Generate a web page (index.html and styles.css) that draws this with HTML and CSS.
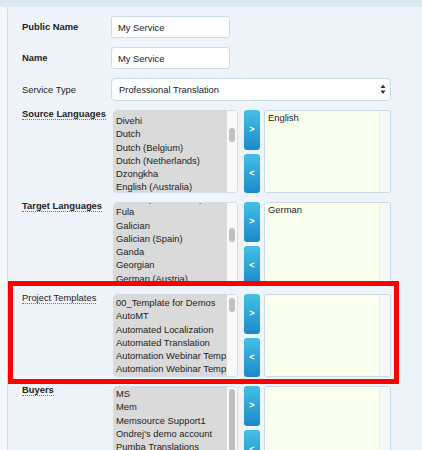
FILE: index.html
```html
<!DOCTYPE html>
<html>
<head>
<meta charset="utf-8">
<link rel="stylesheet" href="styles.css">
</head>
<body>
<div class="topbar"></div>
<div class="page">
  <div class="panel">
    <div class="form">
      <div class="lbl mid"><span class="bold">Public Name</span></div>
      <div class="ctl"><input class="text" type="text" value="My Service"></div>

      <div class="lbl mid"><span class="bold">Name</span></div>
      <div class="ctl"><input class="text" type="text" value="My Service"></div>

      <div class="lbl mid"><span>Service Type</span></div>
      <div class="ctl">
        <div class="select">
          <span>Professional Translation</span>
          <svg class="arrows" width="6" height="11" viewBox="0 0 6 11"><path d="M3 0.5 L5.5 4 L0.5 4 Z M0.5 6.5 L5.5 6.5 L3 10 Z" fill="#333"/></svg>
        </div>
      </div>

      <div class="lbl top"><span class="dot bold">Source Languages</span></div>
      <div class="dual">
        <div class="avail">
          <div class="opts" style="padding-top:3px">
            <div class="opt">Divehi</div>
            <div class="opt">Dutch</div>
            <div class="opt">Dutch (Belgium)</div>
            <div class="opt">Dutch (Netherlands)</div>
            <div class="opt">Dzongkha</div>
            <div class="opt">English (Australia)</div>
            <div class="opt">English (Canada)</div>
          </div>
          <div class="track"><div class="thumb" style="margin-top:17px;height:14px"></div></div>
        </div>
        <div class="btns"><button class="mv">&gt;</button><button class="mv">&lt;</button></div>
        <div class="chosen"><div class="copts"><div class="opt">English</div></div><div class="ctrack"></div></div>
      </div>

      <div class="lbl top"><span class="dot bold">Target Languages</span></div>
      <div class="dual">
        <div class="avail">
          <div class="opts" style="margin-top:-11px">
            <div class="opt">French (Switzerland)</div>
            <div class="opt">Fula</div>
            <div class="opt">Galician</div>
            <div class="opt">Galician (Spain)</div>
            <div class="opt">Ganda</div>
            <div class="opt">Georgian</div>
            <div class="opt">German (Austria)</div>
          </div>
          <div class="track"><div class="thumb" style="margin-top:25px;height:14px"></div></div>
        </div>
        <div class="btns"><button class="mv">&gt;</button><button class="mv">&lt;</button></div>
        <div class="chosen"><div class="copts"><div class="opt">German</div></div><div class="ctrack"></div></div>
      </div>

      <div class="lbl top"><span class="dot">Project Templates</span></div>
      <div class="dual">
        <div class="avail">
          <div class="opts" style="padding-top:1px">
            <div class="opt">00_Template for Demos</div>
            <div class="opt">AutoMT</div>
            <div class="opt">Automated Localization</div>
            <div class="opt">Automated Translation</div>
            <div class="opt">Automation Webinar Temp</div>
            <div class="opt">Automation Webinar Temp</div>
            <div class="opt">Automation Webinar Temp</div>
          </div>
          <div class="track"><div class="thumb" style="margin-top:3px;height:14px"></div></div>
        </div>
        <div class="btns"><button class="mv">&gt;</button><button class="mv">&lt;</button></div>
        <div class="chosen"><div class="copts"></div><div class="ctrack"></div></div>
      </div>

      <div class="lbl top"><span class="dot bold">Buyers</span></div>
      <div class="dual">
        <div class="avail">
          <div class="opts" style="padding-top:0">
            <div class="opt">MS</div>
            <div class="opt">Mem</div>
            <div class="opt">Memsource Support1</div>
            <div class="opt">Ondrej's demo account</div>
            <div class="opt">Pumba Translations</div>
            <div class="opt">Test Buyer</div>
            <div class="opt">Test Buyer 2</div>
          </div>
          <div class="track"><div class="thumb" style="margin-top:2px;height:76px"></div></div>
        </div>
        <div class="btns"><button class="mv">&gt;</button><button class="mv">&lt;</button></div>
        <div class="chosen"><div class="copts"></div><div class="ctrack"></div></div>
      </div>
    </div>
  </div>
  <div class="highlight"></div>
</div>
</body>
</html>
```

FILE: styles.css
```css
html, body {
  margin: 0;
  padding: 0;
}
body {
  background: #f5f8fa;
  font-family: "Liberation Sans", Arial, sans-serif;
  font-size: 9.4px;
  color: #222;
  overflow: hidden;
}
.topbar {
  height: 7px;
  background: #dde9f1;
}
.page {
  position: relative;
}
.panel {
  margin-left: 7px;
  border-left: 1px solid #d3dee6;
  background: #eef4f9;
  padding: 9px 0 20px 14px;
  min-height: 460px;
}
.form {
  display: grid;
  grid-template-columns: 89px 280px;
  row-gap: 9px;
}
.lbl {
  line-height: 12px;
  white-space: nowrap;
}
.lbl.mid {
  align-self: center;
}
.lbl.top {
  align-self: start;
  margin-top: -2px;
}
.bold {
  font-weight: bold;
}
.dot {
  border-bottom: 1px dotted #6b7680;
}
.ctl {
  display: flex;
}
.text {
  box-sizing: border-box;
  width: 119px;
  height: 22px;
  margin: 0;
  padding: 0 6px;
  border: 1px solid #c9dce8;
  border-radius: 3px;
  background: #fff;
  font-family: "Liberation Sans", Arial, sans-serif;
  font-size: 9.4px;
  color: #222;
  outline: none;
}
.select {
  box-sizing: border-box;
  width: 280px;
  height: 23px;
  border: 1px solid #c9dce8;
  border-radius: 4px;
  background: #fff;
  display: flex;
  align-items: center;
  justify-content: space-between;
  padding: 0 4px 0 7px;
}
.arrows {
  display: block;
}
.dual {
  display: flex;
  height: 83px;
  margin-left: 2px;
}
.avail {
  box-sizing: border-box;
  width: 125px;
  height: 83px;
  border: 1px solid #d3dde4;
  border-radius: 4px;
  overflow: hidden;
  display: flex;
}
.opts {
  flex: 1;
  background: #dadada;
  overflow: hidden;
  padding-left: 2px;
}
.opt {
  height: 13.3px;
  line-height: 13.3px;
  white-space: nowrap;
  color: #222;
}
.track {
  width: 10px;
  background: #fafafa;
  display: flex;
  flex-direction: column;
  align-items: center;
}
.thumb {
  width: 5.5px;
  background: #c0c0c0;
  border-radius: 3px;
  flex: none;
}
.btns {
  margin-left: 6px;
  width: 16px;
  display: flex;
  flex-direction: column;
  gap: 4px;
}
.mv {
  flex: 1;
  border: none;
  padding: 0;
  margin: 0;
  border-radius: 3px;
  background: linear-gradient(#43c1e4, #1c89ca);
  color: #fff;
  font-family: "Liberation Sans", Arial, sans-serif;
  font-weight: bold;
  font-size: 9px;
  line-height: 1;
}
.chosen {
  box-sizing: border-box;
  margin-left: 4px;
  width: 127px;
  height: 83px;
  border: 1px solid #c8dbe7;
  border-radius: 3px;
  overflow: hidden;
  display: flex;
}
.copts {
  flex: 1;
  background: #fbffee;
  padding-left: 3px;
}
.ctrack {
  width: 10px;
  background: #f7f8f8;
  border-left: 1px solid #e8edf0;
}
.highlight {
  position: absolute;
  left: 8px;
  top: 274px;
  width: 391px;
  height: 103px;
  box-sizing: border-box;
  border: 5px solid #fe0000;
}
```
